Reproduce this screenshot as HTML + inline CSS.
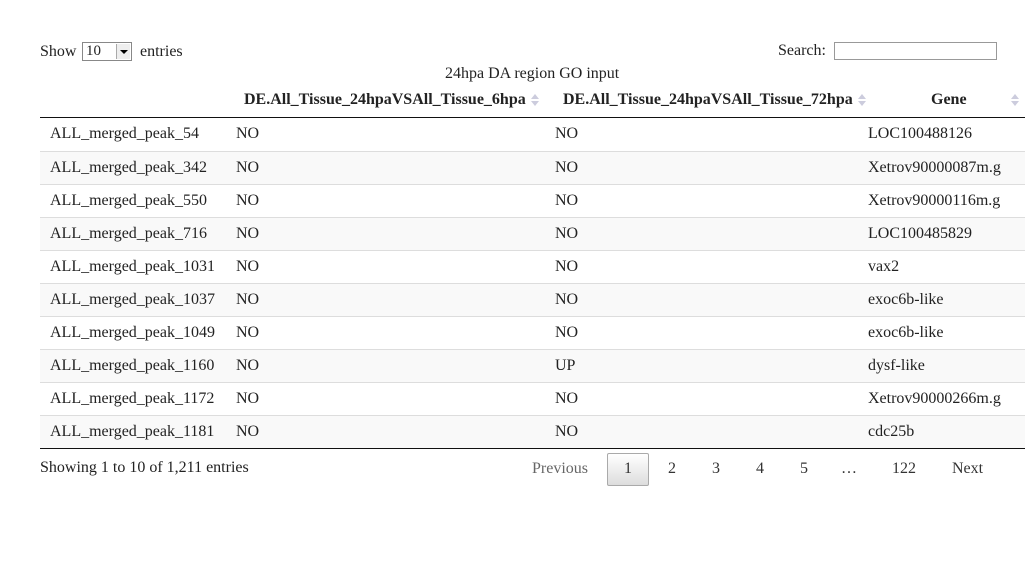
<!DOCTYPE html>
<html><head><style>
body{margin:0;width:1025px;height:580px;background:#fff;font-family:"Liberation Serif",serif;font-size:16px;color:#222;position:relative;overflow:hidden}
.a{position:absolute;white-space:nowrap}
.row{position:absolute;left:40px;width:985px;height:32px;border-top:1px solid #ddd}
.row span{position:absolute;top:7px}
.h{font-weight:bold}
.arr{position:absolute;width:8px;height:14px}
.arr:before{content:"";position:absolute;left:0;top:1px;border:4px solid transparent;border-bottom:5px solid #ccd;border-top:0}
.arr:after{content:"";position:absolute;left:0;top:8px;border:4px solid transparent;border-top:5px solid #ccd;border-bottom:0}
.pg{position:absolute;top:460px;color:#333}
</style></head><body>
<div class="a" style="left:40px;top:43px">Show</div>
<div class="a" style="left:82px;top:42px;width:50px;height:19px;border:1px solid #888;box-sizing:border-box;background:#fff;padding-left:3px;line-height:17px;font-size:15px">10<span style="position:absolute;right:1px;top:1px;width:13px;height:15px;background:#eee;border-left:1px solid #aaa"><span style="position:absolute;left:3px;top:6px;border:4px solid transparent;border-top:4px solid #000;border-bottom:0"></span></span></div>
<div class="a" style="left:140px;top:43px">entries</div>
<div class="a" style="left:778px;top:42px">Search:</div>
<div class="a" style="left:834px;top:42px;width:163px;height:18px;border:1px solid #999;box-sizing:border-box"></div>
<div class="a" style="left:445px;top:65px">24hpa DA region GO input</div>
<div class="a h" style="left:244px;top:91px">DE.All_Tissue_24hpaVSAll_Tissue_6hpa</div>
<div class="arr" style="left:531px;top:93px"></div>
<div class="a h" style="left:563px;top:91px">DE.All_Tissue_24hpaVSAll_Tissue_72hpa</div>
<div class="arr" style="left:858px;top:93px"></div>
<div class="a h" style="left:931px;top:91px">Gene</div>
<div class="arr" style="left:1011px;top:93px"></div>
<div class="a" style="left:40px;top:117px;width:985px;border-top:1px solid #111"></div>
<div class="row" style="top:118px;border-top:0"><span style="left:10px">ALL_merged_peak_54</span><span style="left:196px">NO</span><span style="left:515px">NO</span><span style="left:828px">LOC100488126</span></div>
<div class="row" style="top:151px;background:#f9f9f9"><span style="left:10px">ALL_merged_peak_342</span><span style="left:196px">NO</span><span style="left:515px">NO</span><span style="left:828px">Xetrov90000087m.g</span></div>
<div class="row" style="top:184px"><span style="left:10px">ALL_merged_peak_550</span><span style="left:196px">NO</span><span style="left:515px">NO</span><span style="left:828px">Xetrov90000116m.g</span></div>
<div class="row" style="top:217px;background:#f9f9f9"><span style="left:10px">ALL_merged_peak_716</span><span style="left:196px">NO</span><span style="left:515px">NO</span><span style="left:828px">LOC100485829</span></div>
<div class="row" style="top:250px"><span style="left:10px">ALL_merged_peak_1031</span><span style="left:196px">NO</span><span style="left:515px">NO</span><span style="left:828px">vax2</span></div>
<div class="row" style="top:283px;background:#f9f9f9"><span style="left:10px">ALL_merged_peak_1037</span><span style="left:196px">NO</span><span style="left:515px">NO</span><span style="left:828px">exoc6b-like</span></div>
<div class="row" style="top:316px"><span style="left:10px">ALL_merged_peak_1049</span><span style="left:196px">NO</span><span style="left:515px">NO</span><span style="left:828px">exoc6b-like</span></div>
<div class="row" style="top:349px;background:#f9f9f9"><span style="left:10px">ALL_merged_peak_1160</span><span style="left:196px">NO</span><span style="left:515px">UP</span><span style="left:828px">dysf-like</span></div>
<div class="row" style="top:382px"><span style="left:10px">ALL_merged_peak_1172</span><span style="left:196px">NO</span><span style="left:515px">NO</span><span style="left:828px">Xetrov90000266m.g</span></div>
<div class="row" style="top:415px;background:#f9f9f9"><span style="left:10px">ALL_merged_peak_1181</span><span style="left:196px">NO</span><span style="left:515px">NO</span><span style="left:828px">cdc25b</span></div>
<div class="a" style="left:40px;top:448px;width:985px;border-top:1px solid #111"></div>
<div class="a" style="left:40px;top:459px">Showing 1 to 10 of 1,211 entries</div>
<div class="pg" style="left:532px;color:#666">Previous</div>
<div class="a" style="left:607px;top:453px;width:42px;height:33px;box-sizing:border-box;border:1px solid #aaa;border-radius:2px;background:linear-gradient(#fff,#ddd)"></div>
<div class="pg" style="left:624px">1</div>
<div class="pg" style="left:668px">2</div>
<div class="pg" style="left:712px">3</div>
<div class="pg" style="left:756px">4</div>
<div class="pg" style="left:800px">5</div>
<div class="pg" style="left:841px">…</div>
<div class="pg" style="left:892px">122</div>
<div class="pg" style="left:952px">Next</div>
</body></html>
